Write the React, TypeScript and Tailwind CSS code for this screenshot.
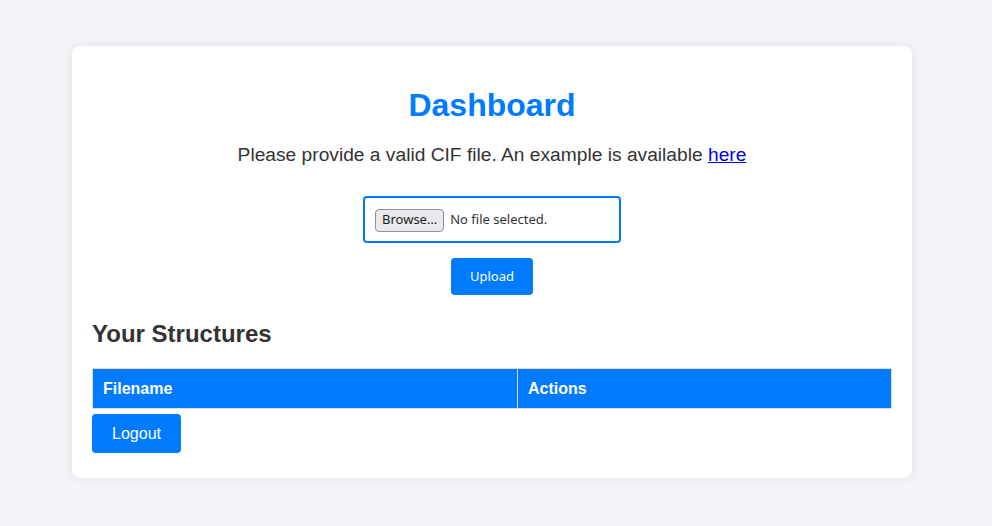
export default function App() {
  return (
    <div className="flex min-h-screen justify-center bg-[#f4f4f8] pt-[46px] pr-[8px] font-['Liberation_Sans',Arial,sans-serif] text-[#333]">
      {/* Card */}
      <div className="h-fit w-[840px] rounded-lg bg-white px-5 pt-[41px] pb-[25px] shadow-[0_0_10px_rgba(0,0,0,0.08)]">
        <h1 className="text-center text-[32px] leading-[37px] font-bold text-[#007bff]">
          Dashboard
        </h1>
        <p className="mt-[20px] text-center text-[19.2px] leading-[22px]">
          Please provide a valid CIF file. An example is available{" "}
          <a href="#" className="text-[#0000ee] underline">
            here
          </a>
        </p>

        {/* Upload form */}
        <div className="mt-[30px] flex flex-col items-center">
          <div className="flex h-[47px] w-[258px] items-center rounded border-2 border-[#007bff] px-[10px] pt-[1px] font-['Noto_Sans',sans-serif] text-[13px] text-[#333]">
            <span className="flex h-[23px] items-center rounded border border-[#8f8f9d] bg-[#e9e9ed] px-[6px] text-[#1b1b1b]">
              Browse…
            </span>
            <span className="ml-[6px]">No file selected.</span>
          </div>
          <button className="mt-[15px] h-[37px] w-[82px] rounded bg-[#007bff] pt-[1px] font-['Noto_Sans',sans-serif] text-[13px] text-white">
            Upload
          </button>
        </div>

        <h2 className="mt-[25px] text-[24px] leading-[28px] font-bold">Your Structures</h2>

        {/* Table */}
        <table className="mt-[20px] w-[800px] border-collapse">
          <thead>
            <tr className="bg-[#007bff] text-left text-white">
              <th className="w-[425px] border border-[#ddd] px-[10px] py-[10px] text-[16px] leading-[19px] font-bold">
                Filename
              </th>
              <th className="border border-[#ddd] px-[10px] py-[10px] text-[16px] leading-[19px] font-bold">
                Actions
              </th>
            </tr>
          </thead>
          <tbody></tbody>
        </table>

        <button className="mt-[5px] h-[39px] w-[89px] rounded bg-[#007bff] text-[16px] text-white">
          Logout
        </button>
      </div>
    </div>
  );
}
